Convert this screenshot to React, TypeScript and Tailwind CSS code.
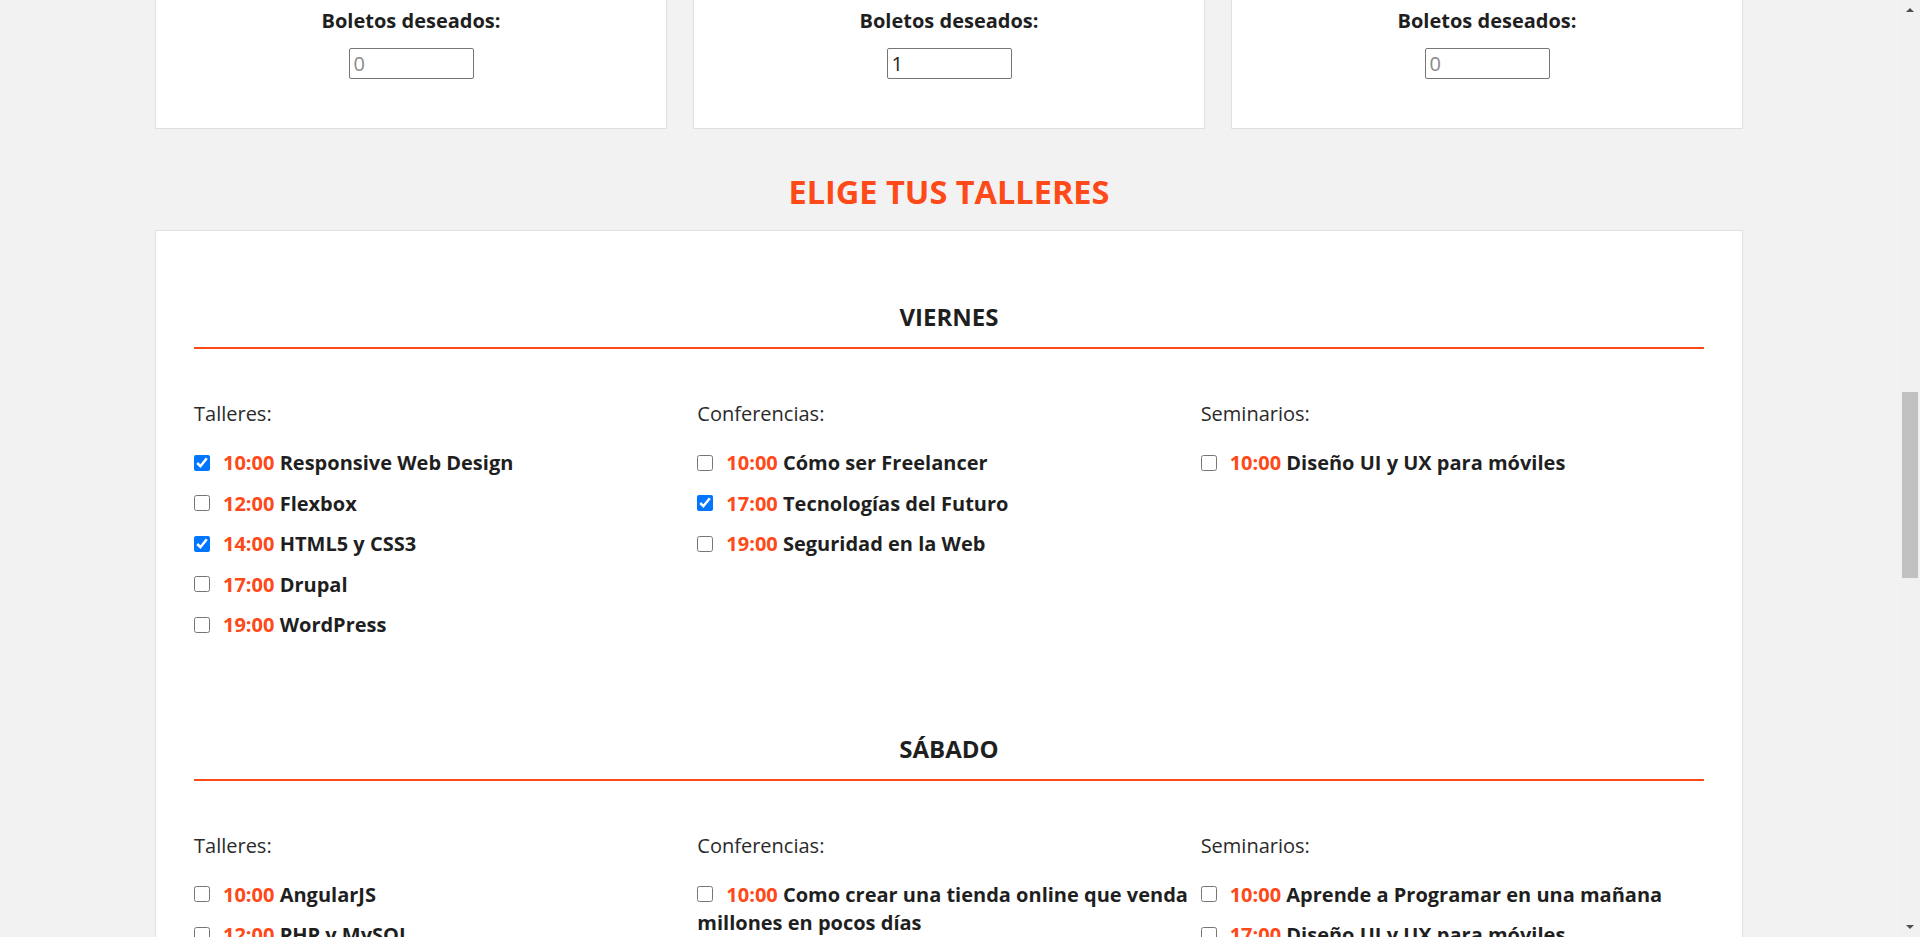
import React from 'react';

type Item = { time: string; title: string; checked?: boolean };
type Column = { label: string; items: Item[] };
type Day = { name: string; columns: Column[] };

const tickets = [
  { id: 'un-dia', value: '' },
  { id: 'completo', value: '1' },
  { id: 'dos-dias', value: '' },
];

const days: Day[] = [
  {
    name: 'VIERNES',
    columns: [
      {
        label: 'Talleres:',
        items: [
          { time: '10:00', title: 'Responsive Web Design', checked: true },
          { time: '12:00', title: 'Flexbox' },
          { time: '14:00', title: 'HTML5 y CSS3', checked: true },
          { time: '17:00', title: 'Drupal' },
          { time: '19:00', title: 'WordPress' },
        ],
      },
      {
        label: 'Conferencias:',
        items: [
          { time: '10:00', title: 'Cómo ser Freelancer' },
          { time: '17:00', title: 'Tecnologías del Futuro', checked: true },
          { time: '19:00', title: 'Seguridad en la Web' },
        ],
      },
      {
        label: 'Seminarios:',
        items: [{ time: '10:00', title: 'Diseño UI y UX para móviles' }],
      },
    ],
  },
  {
    name: 'SÁBADO',
    columns: [
      {
        label: 'Talleres:',
        items: [
          { time: '10:00', title: 'AngularJS' },
          { time: '12:00', title: 'PHP y MySQL' },
          { time: '14:00', title: 'JavaScript Avanzado' },
          { time: '17:00', title: 'SEO en Google' },
          { time: '19:00', title: 'De Photoshop a HTML5 y CSS3' },
        ],
      },
      {
        label: 'Conferencias:',
        items: [
          { time: '10:00', title: 'Como crear una tienda online que venda millones en pocos días' },
          { time: '17:00', title: 'Los mejores lugares para encontrar trabajo' },
          { time: '19:00', title: 'Pasos para crear un negocio rentable' },
        ],
      },
      {
        label: 'Seminarios:',
        items: [
          { time: '10:00', title: 'Aprende a Programar en una mañana' },
          { time: '17:00', title: 'Diseño UI y UX para móviles' },
        ],
      },
    ],
  },
];

const DaySection: React.FC<{ day: Day; first?: boolean }> = ({ day, first }) => (
  <div className={first ? 'pt-[70px]' : 'pt-[81px]'}>
    <h3 className="text-center text-[24px] leading-[32px] font-bold text-[#1f1f1f] pb-[14px] border-b-2 border-[#fe4918]">
      {day.name}
    </h3>
    <div className="grid grid-cols-3 pt-[51px]">
      {day.columns.map((col) => (
        <div key={col.label}>
          <p className="text-[20px] leading-[28px] text-[#2a2a2a] mb-[21px]">{col.label}</p>
          {col.items.map((item) => (
            <label key={item.time + item.title} className="block text-[20px] leading-[28px] font-bold text-[#1f1f1f] mb-[12.5px]">
              <input
                type="checkbox"
                defaultChecked={item.checked}
                className="w-4 h-4 mr-[13px] align-middle relative -top-[2px]"
              />
              <span className="text-[#fe4918]">{item.time}</span> {item.title}
            </label>
          ))}
        </div>
      ))}
    </div>
  </div>
);

export default function App() {
  return (
    <div className="h-screen overflow-hidden flex bg-[#f2f2f2] font-['Open_Sans',sans-serif]">
      <main className="flex-1 min-w-0">
        <div className="ml-[155px] w-[1588px]">
          {/* ticket cards, top cut off by scroll */}
          <div className="grid grid-cols-3 gap-[26px]">
            {tickets.map((t) => (
              <div key={t.id} className="bg-white border-x border-b border-[#e0e0e0] pt-[7px] pb-[49px] flex flex-col items-center">
                <p className="text-[20px] leading-[28px] font-bold text-[#1f1f1f]">Boletos deseados:</p>
                <input
                  type="text"
                  placeholder="0"
                  defaultValue={t.value}
                  className="mt-[13px] w-[125px] h-[31px] px-[4px] border border-[#767676] rounded-[2px] text-[20px] text-[#1f1f1f] placeholder:text-[#8a8a8a] bg-white"
                />
              </div>
            ))}
          </div>

          <h2 className="text-center text-[32.5px] leading-[46px] font-bold text-[#fe4918] mt-[40px] mb-[15px]">
            ELIGE TUS TALLERES
          </h2>

          <div className="bg-white border border-[#e0e0e0] px-[38px] pb-[40px]">
            {days.map((d, i) => (
              <DaySection key={d.name} day={d} first={i === 0} />
            ))}
          </div>
        </div>
      </main>

      {/* scrollbar */}
      <div className="w-[20px] shrink-0 bg-[#f1f1f1] flex flex-col items-center">
        <svg width="10" height="18" viewBox="0 0 10 18" className="shrink-0">
          <path d="M1 12 L5 8 L9 12 Z" fill="#505050" />
        </svg>
        <div className="h-[374px] shrink-0" />
        <div className="w-[16px] h-[186px] bg-[#c1c1c1] shrink-0" />
        <div className="flex-1" />
        <svg width="10" height="18" viewBox="0 0 10 18" className="shrink-0">
          <path d="M1 6 L5 10 L9 6 Z" fill="#505050" />
        </svg>
      </div>
    </div>
  );
}
